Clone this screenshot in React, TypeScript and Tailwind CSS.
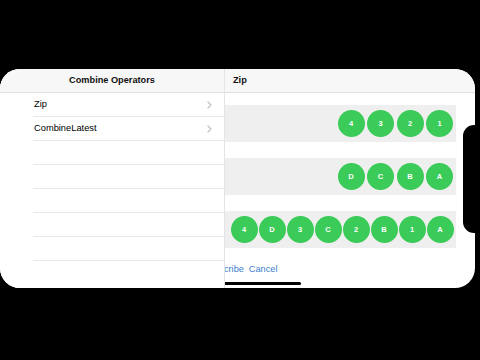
import React from "react";

const Circle = ({ label }: { label: string }) => (
  <div className="w-[27px] h-[27px] rounded-full bg-[#3acb58] flex items-center justify-center text-white text-[7.5px] font-bold shrink-0">
    {label}
  </div>
);

const Chevron = () => (
  <svg width="5" height="8" viewBox="0 0 5 8" className="shrink-0">
    <path d="M1 1 L4 4 L1 7" fill="none" stroke="#c3c3c8" strokeWidth="1.2" strokeLinecap="round" strokeLinejoin="round" />
  </svg>
);

export default function App() {
  const rows = ["Zip", "CombineLatest", "", "", "", "", ""];
  return (
    <div
      className="relative w-[480px] h-[360px] bg-black overflow-hidden pt-[69px]"
      style={{ fontFamily: '"Liberation Sans", Arial, sans-serif' }}
    >
      <div className="relative w-[475px] h-[219px] bg-white rounded-[20px] overflow-hidden flex">
        {/* Left master panel */}
        <div className="w-[225px] shrink-0 flex flex-col border-r border-[#e4e4e4] bg-white z-10">
          <div className="h-[24px] shrink-0 bg-[#f7f7f7] border-b border-[#dedede] flex items-center justify-center text-[9.2px] font-bold text-[#111]">
            Combine Operators
          </div>
          <div className="flex flex-col">
            {rows.map((r, i) => (
              <div key={i} className="h-[24px] pl-[33px]">
                <div className="h-full border-b border-[#e8e8e8] flex items-center justify-between pl-[1px] pr-[12px] text-[9.3px] text-black">
                  <span>{r}</span>
                  {r && <Chevron />}
                </div>
              </div>
            ))}
          </div>
        </div>
        {/* Right detail panel */}
        <div className="flex-1 flex flex-col overflow-hidden">
          <div className="h-[24px] shrink-0 bg-[#f7f7f7] border-b border-[#dedede] flex items-center pl-[8px] text-[9.2px] font-bold text-[#111]">
            Zip
          </div>
          <div className="pt-[12px] pr-[19px] flex flex-col gap-[16px]">
            <div className="h-[37px] bg-[#efefef] flex items-center justify-end gap-[2.5px] pr-[3px]">
              {["4", "3", "2", "1"].map((c) => (
                <Circle key={c} label={c} />
              ))}
            </div>
            <div className="h-[37px] bg-[#efefef] flex items-center justify-end gap-[2.5px] pr-[3px]">
              {["D", "C", "B", "A"].map((c) => (
                <Circle key={c} label={c} />
              ))}
            </div>
            <div className="h-[37px] bg-[#efefef] flex items-center justify-end gap-[1px] pr-[2.5px]">
              {["4", "D", "3", "C", "2", "B", "1", "A"].map((c, i) => (
                <Circle key={i} label={c} />
              ))}
            </div>
          </div>
          <div className="mt-[15px] ml-[-22px] flex gap-[5px] text-[9.2px] text-[#3d80cc]">
            <span>Subscribe</span>
            <span>Cancel</span>
          </div>
        </div>
      </div>
      {/* Notch */}
      <div className="absolute left-[463px] top-[125px] w-[20px] h-[108px] bg-black rounded-l-[11px]" />
      {/* Home indicator */}
      <div className="absolute left-[178px] top-[282px] w-[123px] h-[3px] bg-black rounded-full" />
      {/* Cursor */}
      <svg className="absolute left-[90px] top-[128px]" width="7" height="11" viewBox="0 0 7 11">
        <path d="M0.5 0.5 L0.5 9 L2.6 7.2 L4 10.3 L5.3 9.7 L4 6.7 L6.6 6.7 Z" fill="#111" stroke="#fff" strokeWidth="0.8" strokeLinejoin="round" />
      </svg>
    </div>
  );
}
